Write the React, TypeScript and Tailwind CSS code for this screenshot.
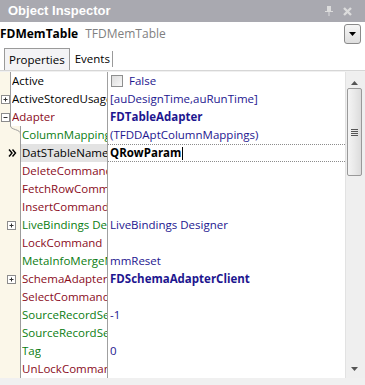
import React from "react";

type Row = {
  name: string;
  color: string;
  value?: string;
  bold?: boolean;
  level: number;
  expand?: "+" | "-";
  check?: boolean;
  selected?: boolean;
  firstChild?: boolean;
};

const MAROON = "text-[#8a0c1c]";
const GREEN = "text-[#0b7d12]";
const BLACK = "text-black";

const rows: Row[] = [
  { name: "Active", color: BLACK, value: "False", check: true, level: 0 },
  { name: "ActiveStoredUsage", color: BLACK, value: "[auDesignTime,auRunTime]", level: 0, expand: "+" },
  { name: "Adapter", color: MAROON, value: "FDTableAdapter", bold: true, level: 0, expand: "-" },
  { name: "ColumnMappings", color: GREEN, value: "(TFDDAptColumnMappings)", level: 1, firstChild: true },
  { name: "DatSTableName", color: BLACK, value: "QRowParam", level: 1, selected: true },
  { name: "DeleteCommand", color: MAROON, level: 1 },
  { name: "FetchRowCommand", color: MAROON, level: 1 },
  { name: "InsertCommand", color: MAROON, level: 1 },
  { name: "LiveBindings Designer", color: GREEN, value: "LiveBindings Designer", level: 1, expand: "+" },
  { name: "LockCommand", color: MAROON, level: 1 },
  { name: "MetaInfoMergeMode", color: GREEN, value: "mmReset", level: 1 },
  { name: "SchemaAdapter", color: MAROON, value: "FDSchemaAdapterClient", bold: true, level: 1, expand: "+" },
  { name: "SelectCommand", color: MAROON, level: 1 },
  { name: "SourceRecordSetID", color: GREEN, value: "-1", level: 1 },
  { name: "SourceRecordSetName", color: GREEN, level: 1 },
  { name: "Tag", color: GREEN, value: "0", level: 1 },
  { name: "UnLockCommand", color: MAROON, level: 1 },
];

function ExpandBox({ sign }: { sign: "+" | "-" }) {
  return (
    <svg width="9" height="9" viewBox="0 0 9 9" className="shrink-0">
      <rect x="0.5" y="0.5" width="8" height="8" fill="#fff" stroke="#8c8c8c" />
      <path d="M2.5 4.5h4" stroke="#333" />
      {sign === "+" && <path d="M4.5 2.5v4" stroke="#333" />}
    </svg>
  );
}

function PropRow({ row }: { row: Row }) {
  const gutter = row.level === 0 ? "w-[11px]" : "w-[21px]";
  return (
    <div className="flex h-[18px]">
      <div className={`relative flex shrink-0 items-center bg-[#fbf7e9] border-r border-[#9c9c9c] ${gutter}`}>
        {row.expand && (
          <div className={row.level === 0 ? "pl-[1px]" : "pl-[7px]"}>
            <ExpandBox sign={row.expand} />
          </div>
        )}
        {row.selected && (
          <svg width="9" height="8" viewBox="0 0 9 8" className="ml-[8px]">
            <path d="M1 0.5l3 3.5-3 3.5M4.5 0.5l3 3.5-3 3.5" fill="none" stroke="#000" strokeWidth="1.4" />
          </svg>
        )}
        {row.firstChild && (
          <svg width="11" height="8" viewBox="0 0 11 8" className="absolute left-[10px] top-0">
            <path d="M0.5 0 C0.5 4 10.5 3 10.5 8" fill="none" stroke="#9c9c9c" />
          </svg>
        )}
      </div>
      <div
        className={`flex shrink-0 items-center overflow-hidden whitespace-nowrap border-r border-[#a0a0a0] pl-[1px] ${
          row.level === 0 ? "w-[97px]" : "w-[87px]"
        } ${row.color} ${row.selected ? "bg-[#e3e3e3]" : "bg-white"}`}
      >
        <span className="overflow-hidden">{row.name}</span>
      </div>
      <div
        className={`flex min-w-0 flex-1 items-center overflow-hidden whitespace-nowrap pl-[2px] bg-white ${
          row.selected ? "border-y border-dotted border-[#8c8c8c]" : ""
        }`}
      >
        {row.check && (
          <span className="mr-[6px] ml-[1px] h-[12px] w-[12px] border border-[#8e8f8f] bg-gradient-to-br from-[#dcdcdc] to-[#f8f8f8]" />
        )}
        {row.selected ? (
          <span className="flex items-center font-bold text-black">
            QRowParam
            <span className="ml-[1px] h-[13px] w-[1px] bg-black" />
          </span>
        ) : (
          <span className={`text-[#1d168f] ${row.bold ? "font-bold" : ""}`}>{row.value}</span>
        )}
      </div>
    </div>
  );
}

function Scrollbar() {
  return (
    <div className="flex w-[20px] shrink-0 flex-col border-l border-[#e2e2e2] bg-[#efefef] pr-[2px]">
      <div className="flex h-[16px] items-end justify-center pb-[3px]">
        <svg width="7" height="4" viewBox="0 0 7 4">
          <path d="M3.5 0L7 4H0z" fill="#555" />
        </svg>
      </div>
      <div className="mx-[1px] flex h-[88px] items-center justify-center rounded-[2px] border border-[#999] bg-gradient-to-r from-[#f4f4f4] via-[#e9e9e9] to-[#dcdcdc]">
        <div className="flex flex-col gap-[1px]">
          <div className="h-[1px] w-[7px] bg-[#555]" />
          <div className="h-[1px] w-[7px] bg-[#555]" />
          <div className="h-[1px] w-[7px] bg-[#555]" />
          <div className="h-[1px] w-[7px] bg-[#555]" />
        </div>
      </div>
      <div className="flex-1" />
      <div className="flex h-[16px] items-start justify-center pt-[5px]">
        <svg width="7" height="4" viewBox="0 0 7 4">
          <path d="M0 0H7L3.5 4z" fill="#555" />
        </svg>
      </div>
    </div>
  );
}

export default function App() {
  return (
    <div className="flex h-[385px] w-[365px] flex-col overflow-hidden bg-white text-[11.5px] font-['Open_Sans',sans-serif]">
      {/* title */}
      <div className="flex h-[22px] shrink-0 items-center justify-between bg-[#a9a9b0] pl-[8px] pr-[13px]">
        <span className="font-['Liberation_Sans',sans-serif] text-[13px] font-bold text-white">Object Inspector</span>
        <div className="flex items-center gap-[10px]">
          <svg width="8" height="10" viewBox="0 0 8 10">
            <path d="M2 0h4v5H2z M0 5h8v1H0z M3.5 6h1v4h-1z" fill="#dcdcdc" />
          </svg>
          <svg width="9" height="9" viewBox="0 0 9 9">
            <path d="M1 1l7 7M8 1L1 8" stroke="#dcdcdc" strokeWidth="2.4" />
          </svg>
        </div>
      </div>

      {/* component selector */}
      <div className="flex h-[24px] shrink-0 items-center pr-[4px] text-[12px]">
        <span className="font-bold text-black">FDMemTable</span>
        <span className="ml-[7px] text-[#7f7f7f]">TFDMemTable</span>
        <div className="flex-1" />
        <div className="flex h-[20px] w-[17px] items-center justify-center rounded-[3px] border border-[#8a8a8a] bg-gradient-to-b from-[#f6f6f6] to-[#dedede]">
          <svg width="7" height="4" viewBox="0 0 7 4">
            <path d="M0 0H7L3.5 4z" fill="#000" />
          </svg>
        </div>
      </div>

      {/* tabs */}
      <div className="flex h-[24px] shrink-0 items-end pl-[4px]">
        <div className="flex h-[22px] items-center border-x border-t border-[#9a9a9a] bg-[#f3f3f5] px-[4px]">
          Properties
        </div>
        <div className="flex h-[22px] items-center px-[5px]">
          <span>Events</span>
          <span className="ml-[2px] h-[16px] w-[1px] bg-[#9a9a9a]" />
        </div>
      </div>
      <div className="h-[2px] shrink-0 border-t border-[#d6d6d6] bg-[#f0f0f0]" />

      {/* grid */}
      <div className="flex h-[306px] shrink-0">
        <div className="flex min-w-0 flex-1 flex-col">
          {rows.map((r) => (
            <PropRow key={r.name} row={r} />
          ))}
        </div>
        <Scrollbar />
      </div>

      <div className="flex-1 bg-[#f0f0f0]" />
    </div>
  );
}
